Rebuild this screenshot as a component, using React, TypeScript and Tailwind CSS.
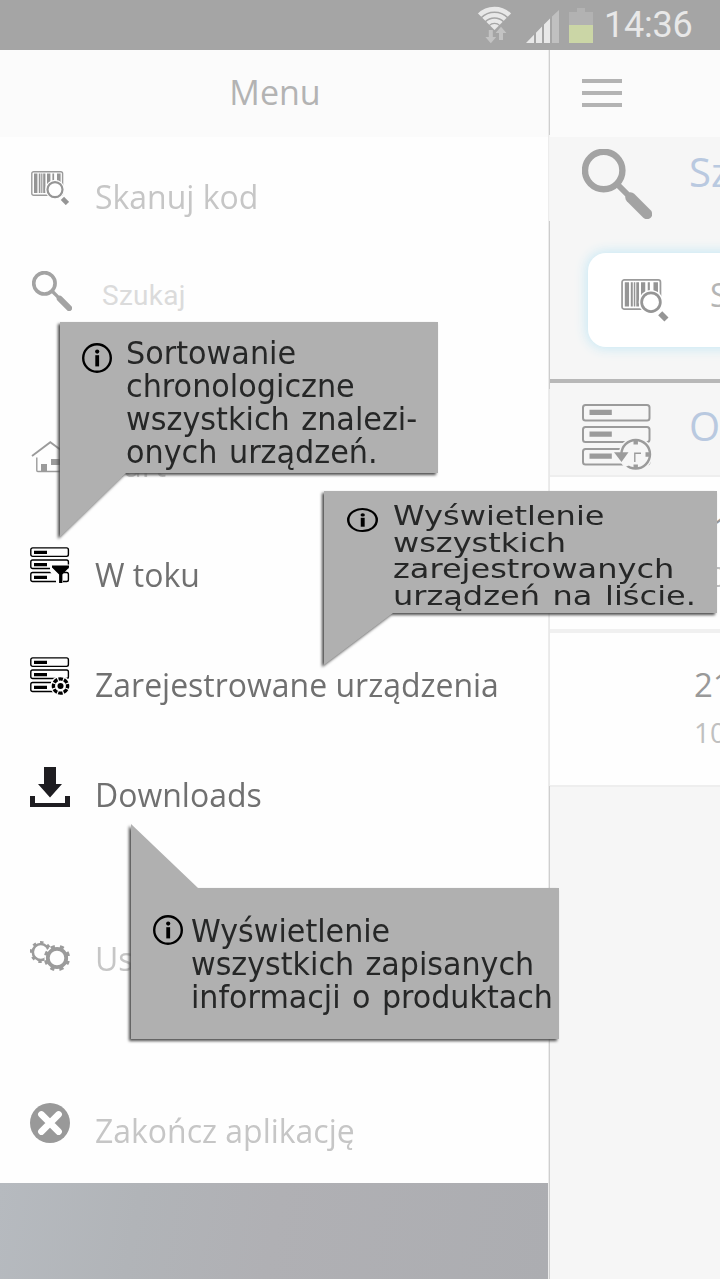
import React from "react";

function StatusBar() {
  return (
    <header className="flex h-[50px] shrink-0 items-start justify-end bg-[#a5a5a5] pr-[28px]">
      <svg width="124" height="50" viewBox="474 0 124 50" className="shrink-0">
        <defs>
          <clipPath id="fan">
            <path d="M494.5 30 L474.5 10 L474.500 0 H514.500 V10 Z" />
          </clipPath>
        </defs>
        <g clipPath="url(#fan)" fill="none" stroke="#e8e8e8">
          <circle cx="494.500" cy="31" r="21.900" strokeWidth="4.600" />
          <circle cx="494.500" cy="31" r="15.900" strokeWidth="4.200" />
          <circle cx="494.500" cy="31" r="10.200" strokeWidth="4" />
          <circle cx="494.500" cy="31" r="3.500" strokeWidth="6.800" />
        </g>
        <path d="M488.800 30h4v7h3.400l-5.400 6.300-5.400-6.300h3.400zM499 40h4v-7h3.400l-5.400-6.300-5.400 6.300h3.400z" fill="#c3c3c3" />
        <path d="M526 43 L534 34.800 V43ZM536 43V32.800L542 26.600V43ZM544 43V24.600L550 18.400V43Z" fill="#e8e8e8" />
        <path d="M552 43V16.400L559 10V43Z" fill="#c0c0c0" />
        <path d="M577 8h8v4h8v13h-24V12h8z" fill="#b2b2b2" />
        <path d="M569 25h24v18h-24z" fill="#cbd6a6" />
      </svg>
      <span className="ml-[6px] w-[88px] whitespace-nowrap font-['Roboto'] text-[36px] leading-[50px] tracking-[-0.2px] text-[#e8e8e8]">14:36</span>
    </header>
  );
}

function BarcodeIcon({ width, height, bg }: { width: number; height: number; bg: string }) {
  return (
    <svg width={width} height={height} viewBox="0 0 38 34.5">
      <rect x="0.8" y="0.8" width="30.800" height="23.400" rx="1.800" fill="none" stroke="#9b9b9b" strokeWidth="1.400" />
      <path d="M3 2.600h3.400v19.400H3zM7.800 2.600h1.600v19.400H7.800zM10.200 2.600h1.200v19.400H10.200zM12.200 2.600h2.200v19.400h-2.200zM16 2.600h3.400v19.400H16zM21.400 2.600h1.700v19.400h-1.700zM26 2.600h3.600v19.400H26z" fill="#959595" />
      <circle cx="24" cy="18.600" r="9.800" fill={bg} />
      <circle cx="24" cy="18.600" r="7.500" fill="#fff" stroke="#959595" strokeWidth="2.200" />
      <path d="M31.400 27.400l5 5.100" stroke="#959595" strokeWidth="4.600" />
    </svg>
  );
}

function SearchIcon({ size }: { size: number }) {
  return (
    <svg width={size} height={size} viewBox="0 0 70 70">
      <circle cx="21.700" cy="21.500" r="18.700" fill="none" stroke="#a3a3a3" strokeWidth="6.400" />
      <path d="M35 35l12 12" stroke="#a3a3a3" strokeWidth="6" />
      <path d="M48.500 48.500l16.500 16.500" stroke="#a3a3a3" strokeWidth="10.400" strokeLinecap="round" />
    </svg>
  );
}

function HomeIcon() {
  return (
    <svg width="40" height="34" viewBox="0 0 40 34" fill="none" stroke="#9b9b9b" strokeWidth="1.900">
      <path d="M1 16L19.300 2.200L38 16" />
      <path d="M5.800 17.500V30.500q0 1 1 1H33V18" strokeWidth="1.400" />
      <path d="M10 24h6v7.500h-6zM20 19h9v6h-9z" fill="#9b9b9b" stroke="none" />
    </svg>
  );
}

function ServerRows() {
  return (
    <>
      <g fill="none" stroke="#000" strokeWidth="1.400">
        <rect x="0.800" y="0.900" width="37.600" height="8.500" rx="1.800" />
        <rect x="0.800" y="13" width="37.600" height="8.500" rx="1.800" />
        <rect x="0.800" y="25.500" width="37.600" height="9" rx="1.800" />
      </g>
      <path d="M4 3.800h13v3.200H4zM4 16h13v3.200H4zM4 28.700h13v3.200H4z" fill="#000" />
    </>
  );
}

function FilterListIcon() {
  return (
    <svg width="40" height="38" viewBox="0 0 40 38">
      <ServerRows />
      <path d="M20 17.500h20v4H37l-4 5v12h-5l-2-3v-2l-6-9z" fill="#fefefe" />
      <path d="M22 18.600h17v2l-6.600 6.800v8.500h-3.300v-8.500l-7.100-6.800z" fill="#000" />
    </svg>
  );
}

function DeviceListIcon() {
  return (
    <svg width="40" height="38" viewBox="0 0 40 38">
      <ServerRows />
      <circle cx="30.500" cy="29" r="10.200" fill="#fefefe" />
      <circle cx="30.500" cy="29" r="7.100" fill="none" stroke="#000" strokeWidth="3.400" strokeDasharray="4.400 1.176" strokeDashoffset="2.200" />
      <circle cx="30.500" cy="29" r="3" fill="#000" />
    </svg>
  );
}

function DownloadIcon() {
  return (
    <svg width="40" height="40" viewBox="0 0 40 40" fill="#1e1d21">
      <path d="M14 0h12v17h6L20 30.500 8 17h6zM0 29h5v7h30v-7h5v11H0z" />
    </svg>
  );
}

function GearsIcon() {
  return (
    <svg width="42" height="34" viewBox="30 939 42 34" fill="none" stroke="#9b9b9b">
      <circle cx="40.800" cy="952" r="8" strokeWidth="2.600" />
      <circle cx="40.800" cy="952" r="9.700" strokeWidth="2.600" strokeDasharray="3.400 4.218" strokeDashoffset="1" />
      <circle cx="57" cy="958" r="12.600" fill="#fefefe" stroke="none" />
      <circle cx="57" cy="958" r="9.200" strokeWidth="3.800" />
      <circle cx="57" cy="958" r="11.600" strokeWidth="3.200" strokeDasharray="4.200 4.911" strokeDashoffset="2.100" transform="rotate(22.500 57 958)" />
    </svg>
  );
}

function CloseIcon() {
  return (
    <svg width="40" height="40" viewBox="0 0 40 40">
      <circle cx="20" cy="20" r="20" fill="#999" />
      <path d="M11.400 11.400l17.200 17.200M28.600 11.400L11.400 28.600" stroke="#fff" strokeWidth="6.600" strokeLinecap="round" />
    </svg>
  );
}

function HistoryListIcon() {
  return (
    <svg width="70" height="68" viewBox="582 403 70 68" className="shrink-0">
      <g fill="none" stroke="#9b9b9b" strokeWidth="2">
        <rect x="583" y="405" width="66.500" height="15.500" rx="2.500" />
        <rect x="583" y="427" width="66.500" height="15" rx="2.500" />
        <rect x="583" y="449" width="66.500" height="15.500" rx="2.500" />
      </g>
      <path d="M589.500 409.700h22.300v5.300h-22.300zM589.500 431.500h22.300v5.300h-22.300zM589.500 453.400h22.300v5.300h-22.300z" fill="#9b9b9b" />
      <circle cx="635.700" cy="454.300" r="17" fill="#f6f6f6" />
      <circle cx="635.700" cy="454.300" r="14.300" fill="none" stroke="#9b9b9b" strokeWidth="2.400" />
      <path d="M618 457l6-1 6 9-5 2z" fill="#f6f6f6" />
      <path d="M614 452.300h14.500l-7 9.700z" fill="#9b9b9b" />
      <path d="M633.500 441h4.400v3.500h-4.400zM633.500 464.500h4.400v3.500h-4.400zM645.500 452.300h3.500v4.400h-3.500z" fill="#9b9b9b" />
      <path d="M634.800 462V453.300H641" fill="none" stroke="#9b9b9b" strokeWidth="1.400" />
    </svg>
  );
}

const rowText = "origin-left scale-x-[0.969] whitespace-nowrap pt-[2px] font-['Open_Sans','Noto_Sans',sans-serif] text-[33px] leading-[44px]";

function Menu() {
  return (
    <nav className="flex w-[548px] shrink-0 flex-col bg-[#fefefe]">
      <h1 className="flex h-[87px] shrink-0 items-center justify-center bg-[#fbfbfb] font-['Open_Sans',sans-serif] text-[34px] text-[#b3b3b3]">
        <span className="pb-[2px] pl-[2px]">Menu</span>
      </h1>
      <div className="flex h-[118px] shrink-0 items-center pl-[31px]">
        <div className="w-[64px] pb-4"><BarcodeIcon width={38} height={34.5} bg="#fefefe" /></div>
        <span className={`${rowText} text-[#c6c6c6]`}>Skanuj kod</span>
      </div>
      <div className="flex h-[80px] shrink-0 items-center pl-[32px]">
        <div className="w-[70px] pb-2"><SearchIcon size={40} /></div>
        <span className="pt-[2px] font-['Roboto',sans-serif] text-[28px] tracking-[0.3px] text-[#dbdbdb]">Szukaj</span>
      </div>
      <div className="mt-[74px] flex h-[110px] shrink-0 items-center pl-[31px]">
        <div className="w-[64px] pb-[14px]"><HomeIcon /></div>
        <span className={`${rowText} text-[#c6c6c6]`}>Start</span>
      </div>
      <div className="flex h-[110px] shrink-0 items-center pl-[30px]">
        <div className="w-[65px] pb-[16px]"><FilterListIcon /></div>
        <span className={`${rowText} text-[#707070]`}>W toku</span>
      </div>
      <div className="flex h-[110px] shrink-0 items-center pl-[30px]">
        <div className="w-[65px] pb-[16px]"><DeviceListIcon /></div>
        <span className={`${rowText} text-[#707070]`}>Zarejestrowane urządzenia</span>
      </div>
      <div className="flex h-[110px] shrink-0 items-center pl-[30px]">
        <div className="w-[65px] pb-[14px]"><DownloadIcon /></div>
        <span className={`${rowText} text-[#707070]`}>Downloads</span>
      </div>
      <div className="mt-[54px] flex h-[110px] shrink-0 items-center pl-[30px]">
        <div className="w-[65px] pb-[4px]"><GearsIcon /></div>
        <span className={`${rowText} text-[#c6c6c6]`}>Ust</span>
      </div>
      <div className="mt-[64px] flex h-[106px] shrink-0 items-center pl-[30px]">
        <div className="w-[65px] pb-[14px]"><CloseIcon /></div>
        <span className={`${rowText} text-[#c6c6c6]`}>Zakończ aplikację</span>
      </div>
      <div className="h-[96px] shrink-0 bg-linear-[100deg,#b6babf_0%,#b1b4b8_25%,#b0b0b4_50%,#acadb1_100%]" />
    </nav>
  );
}

function Divider() {
  return (
    <div className="flex w-[2px] shrink-0 flex-col">
      <div className="h-[85px] border-l border-[#ececec] bg-[#cfcfcf]" />
      <div className="h-[86px] border-l border-[#ececec] bg-[#f4f4f4]" />
      <div className="h-[168px] border-l border-[#ececec] bg-[#cdcdcd]" />
      <div className="h-[397px] border-l border-[#ececec] bg-[#e9e9e9]" />
      <div className="grow border-l border-[#ececec] bg-[#cfcfcf]" />
    </div>
  );
}

function DeviceRow() {
  return (
    <div className="h-[152px] shrink-0 bg-[#fefefe] pl-[144px] pt-[30px] font-['Open_Sans',sans-serif]">
      <div className="text-[33px] leading-[44px] text-[#999]">21</div>
      <div className="pt-[6px] text-[28px] leading-[38px] text-[#c0c0c0]">10</div>
    </div>
  );
}

function Content() {
  return (
    <main className="flex min-w-0 grow flex-col overflow-hidden bg-[#f6f6f6]">
      <div className="flex h-[87px] shrink-0 flex-col gap-[8px] bg-[#fbfbfb] pl-[32px] pt-[29px]">
        <div className="h-[4px] w-[40px] bg-[#b3b3b3]" />
        <div className="h-[4px] w-[40px] bg-[#b3b3b3]" />
        <div className="h-[4px] w-[40px] bg-[#b3b3b3]" />
      </div>
      <div className="flex h-[116px] shrink-0 pl-[32px] pt-[12px]">
        <div className="w-[107px] shrink-0"><SearchIcon size={70} /></div>
        <span className="mt-[-4px] font-['Open_Sans',sans-serif] text-[40px] leading-[54px] text-[#b9c9e0]">Sz</span>
      </div>
      <div className="ml-[38px] mr-[-40px] flex h-[94px] shrink-0 rounded-[18px] bg-white pl-[33px] pt-[26px] shadow-[0_0_12px_2px_#c9e9f5]">
        <div className="w-[89px] shrink-0"><BarcodeIcon width={47.500} height={43} bg="#fff" /></div>
        <span className="font-['Open_Sans',sans-serif] text-[32px] leading-[32px] text-[#b5b5b5]">S</span>
      </div>
      <div className="mt-[32px] h-[4px] shrink-0 bg-[#b8b8b8]" />
      <div className="flex h-[94px] shrink-0 border-b-2 border-[#eeeeee] pl-[32px] pt-[20px]">
        <HistoryListIcon />
        <span className="ml-[37px] mt-[-4px] font-['Open_Sans',sans-serif] text-[40px] leading-[54px] text-[#b9c9e0]">O</span>
      </div>
      <DeviceRow />
      <div className="h-[4px] shrink-0 bg-[#f0f0f0]" />
      <DeviceRow />
      <div className="h-[2px] shrink-0 bg-[#eeeeee]" />
    </main>
  );
}

function InfoIcon({ width, height }: { width: number; height: number }) {
  return (
    <svg width={width} height={height} viewBox="0 0 30 30" preserveAspectRatio="none" className="shrink-0">
      <circle cx="15" cy="15" r="13.800" fill="none" stroke="#000" strokeWidth="2.400" />
      <circle cx="15.200" cy="8.600" r="2.100" fill="#000" />
      <path d="M13.300 12.200h3.800V23.400h-3.800z" fill="#000" />
    </svg>
  );
}

const bubbleText = "origin-left whitespace-nowrap font-['DejaVu_Sans',sans-serif] text-[#262727] [word-spacing:2px]";
const shadow = "absolute inset-0 [filter:drop-shadow(-2px_2px_1.5px_#4a4a4a)]";

function Bubbles() {
  return (
    <>
      <aside className="absolute left-[60px] top-[322px] h-[215px] w-[378px]">
        <div className={shadow}>
          <div className="h-full bg-[#b0b0b0] [clip-path:polygon(0_0,100%_0,100%_151px,66px_151px,0_100%)]" />
        </div>
        <div className="relative flex pl-[22px] pt-[15px]">
          <div className="w-[44px] shrink-0 pt-[6px]"><InfoIcon width={30} height={30} /></div>
          <p className={`${bubbleText} scale-x-[0.946] text-[32px] leading-[33px]`}>
            Sortowanie<br />chronologiczne<br />wszystkich znalezi-<br />onych urządzeń.
          </p>
        </div>
      </aside>
      <aside className="absolute left-[324px] top-[491px] h-[174px] w-[393px]">
        <div className={shadow}>
          <div className="h-full bg-[#b0b0b0] [clip-path:polygon(0_0,100%_0,100%_122px,69px_122px,0_100%)]" />
        </div>
        <div className="relative flex pl-[23px] pt-[12px]">
          <div className="w-[46px] shrink-0 pt-[5px]"><InfoIcon width={31} height={24} /></div>
          <p className={`${bubbleText} scale-x-[1.208] text-[26.500px] leading-[26.700px]`}>
            Wyświetlenie<br />wszystkich<br />zarejestrowanych<br />urządzeń na liście.
          </p>
        </div>
      </aside>
      <aside className="absolute left-[131px] top-[824px] h-[215px] w-[428px]">
        <div className={shadow}>
          <div className="h-full bg-[#b0b0b0] [clip-path:polygon(0_0,67px_64px,100%_64px,100%_100%,0_100%)]" />
        </div>
        <div className="relative flex pl-[22px] pt-[91px]">
          <div className="w-[38px] shrink-0"><InfoIcon width={30} height={30} /></div>
          <p className={`${bubbleText} scale-x-[0.942] text-[32px] leading-[33px]`}>
            Wyświetlenie<br />wszystkich zapisanych<br />informacji o produktach
          </p>
        </div>
      </aside>
    </>
  );
}

export default function App() {
  return (
    <div className="relative flex h-[1279px] w-[720px] flex-col overflow-hidden bg-white">
      <StatusBar />
      <div className="flex min-h-0 grow">
        <Menu />
        <Divider />
        <Content />
      </div>
      <Bubbles />
    </div>
  );
}
